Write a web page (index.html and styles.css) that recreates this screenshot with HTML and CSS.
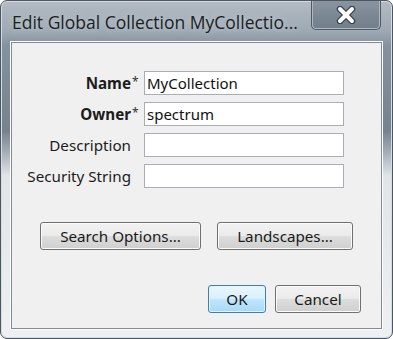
FILE: index.html
```html
<!DOCTYPE html>
<html lang="en">
<head>
  <meta charset="UTF-8">
  <title>Edit Global Collection</title>
  <link rel="stylesheet" href="styles.css">
</head>
<body>
  <div class="window">
    <div class="titlebar">
      <span class="title">Edit Global Collection MyCollectio...</span>
      <div class="close-btn">
        <svg viewBox="0 0 22 18" width="22" height="18">
          <path d="M5 3 L17 15 M17 3 L5 15" stroke="#36414c" stroke-width="6.5" stroke-linecap="round"/>
          <path d="M5 3 L17 15 M17 3 L5 15" stroke="#fff" stroke-width="4" stroke-linecap="round"/>
        </svg>
      </div>
    </div>
    <div class="panel">
      <div class="fields">
        <label class="label required">Name</label><span class="star">*</span>
        <input class="field" type="text" value="MyCollection">
        <label class="label required">Owner</label><span class="star">*</span>
        <input class="field" type="text" value="spectrum">
        <label class="label">Description</label><span class="star"></span>
        <input class="field" type="text">
        <label class="label">Security String</label><span class="star"></span>
        <input class="field" type="text">
      </div>
      <div class="extra-buttons">
        <button class="btn btn-search">Search Options...</button>
        <button class="btn btn-landscapes">Landscapes...</button>
      </div>
      <div class="dialog-buttons">
        <button class="btn btn-ok">OK</button>
        <button class="btn btn-cancel">Cancel</button>
      </div>
    </div>
  </div>
</body>
</html>
```

FILE: styles.css
```css
body {
  margin: 0;
  background: #fff;
  font-family: 'Open Sans', 'Noto Sans', Arial, sans-serif;
}
.window {
  width: 393px;
  height: 339px;
  box-sizing: border-box;
  border: 1px solid #4b5662;
  border-radius: 7px;
  background: linear-gradient(180deg, #b3bbc3 0px, #9ea9b4 30px, #84919e 45px, #76838f 130px, #a2abb4 150px, #e2e5e8 175px, #eef0f2 339px);
  box-shadow: inset 0 0 0 1px #d6dce2;
  overflow: hidden;
}
.titlebar {
  height: 41px;
  display: flex;
  align-items: flex-start;
}
.title {
  padding: 9px 0 0 11px;
  font-size: 17.5px;
  color: #1a1f24;
  white-space: nowrap;
  text-shadow: 0 0 6px #ccd2d8;
}
.close-btn {
  margin: -2px 11px 0 auto;
  width: 70px;
  height: 31px;
  box-sizing: border-box;
  border: 1px solid #4f5a66;
  border-top: none;
  border-radius: 0 0 5px 5px;
  background: linear-gradient(180deg, #8b96a1 0%, #7a8692 60%, #727e8a 100%);
  box-shadow: inset 0 0 0 1px #aeb8c2;
  display: flex;
  align-items: center;
  justify-content: center;
}
.close-btn svg {
  margin-top: 2px;
}
.panel {
  margin: 0 10px;
  height: 287px;
  box-sizing: border-box;
  border: 1px solid #858b91;
  box-shadow: 0 0 0 1px #fbfcfd;
  background: #f0f0f0;
  padding: 28px 0 0 0;
  font-family: 'Noto Sans', 'Open Sans', Arial, sans-serif;
}
.fields {
  display: grid;
  grid-template-columns: 119px 13px 200px;
  row-gap: 7px;
  align-items: center;
}
.label {
  text-align: right;
  font-size: 15.2px;
  color: #1c1c1c;
}
.label.required {
  font-weight: bold;
}
.star {
  font-size: 12px;
  color: #333;
  align-self: start;
  padding-left: 1px;
  margin-top: 2px;
}
.field {
  width: 200px;
  height: 24px;
  box-sizing: border-box;
  border: 1px solid #a8aeb4;
  background: #fff;
  padding: 0 3px 0 2px;
  font-family: 'Noto Sans', 'Open Sans', Arial, sans-serif;
  font-size: 15px;
  color: #111;
  outline: none;
  margin: 0;
}
.extra-buttons {
  display: flex;
  gap: 16px;
  padding-left: 28px;
  margin-top: 34px;
}
.dialog-buttons {
  display: flex;
  justify-content: flex-end;
  gap: 9px;
  padding-right: 20px;
  margin-top: 35px;
}
.btn {
  height: 28px;
  box-sizing: border-box;
  border: 1px solid #707070;
  border-radius: 3px;
  background: linear-gradient(180deg, #f2f2f2 0%, #ebebeb 48%, #dddddd 52%, #cfcfcf 100%);
  box-shadow: inset 0 0 0 1px #fbfbfb;
  font-family: 'Noto Sans', 'Open Sans', Arial, sans-serif;
  font-size: 15.2px;
  color: #1a1a1a;
  padding: 0;
}
.btn-search { width: 161px; }
.btn-landscapes { width: 136px; }
.btn-ok {
  width: 58px;
  border-color: #3c7fb1;
  background: linear-gradient(180deg, #eaf6fd 0%, #d9f0fc 48%, #bee6fd 52%, #a7d9f5 100%);
  box-shadow: inset 0 0 0 1px #e4f3fc;
}
.btn-cancel { width: 86px; }
```
